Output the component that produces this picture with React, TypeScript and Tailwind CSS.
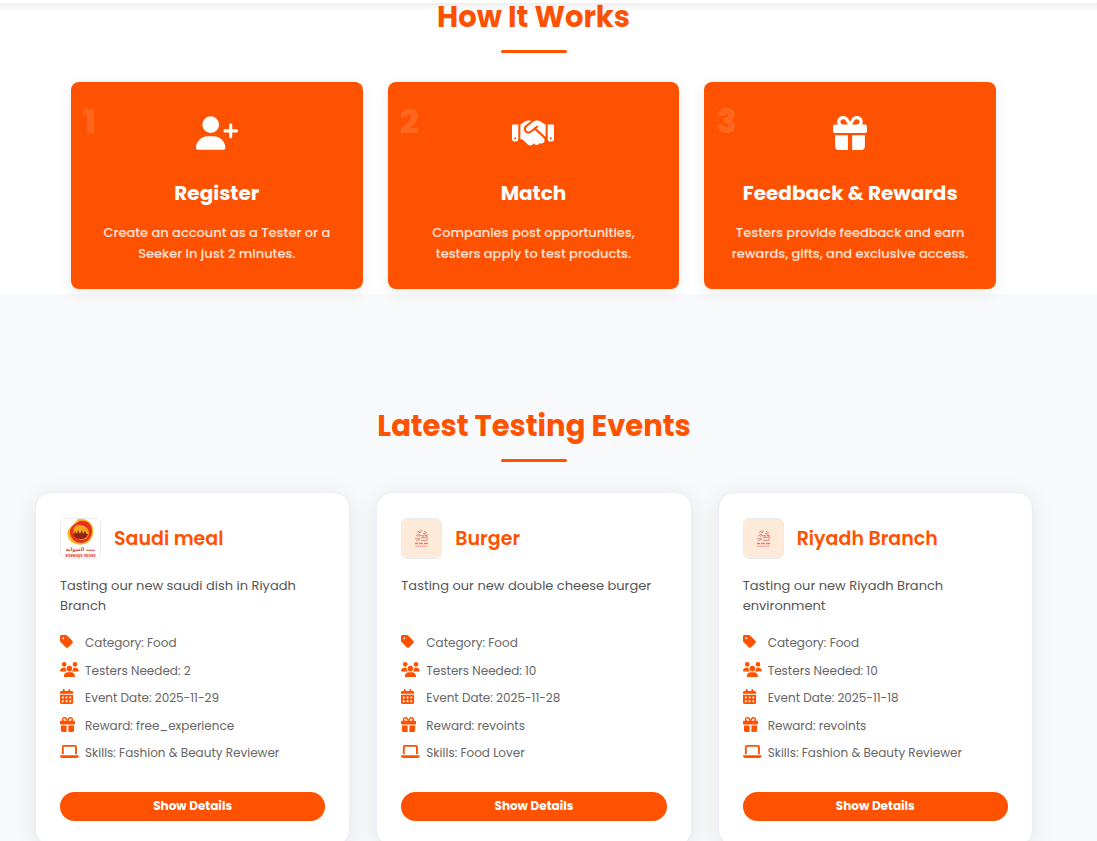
import React from 'react';
import {FaUserPlus, FaHandshake, FaGift, FaTag, FaUsers, FaCalendarDays, FaLaptop} from 'react-icons/fa6';
import type {IconType} from 'react-icons';

type Step = {
    title: string;
    text: string;
    icon: IconType;
};

type TestingEvent = {
    title: string;
    description: string;
    category: string;
    testers: number;
    date: string;
    reward: string;
    skills: string;
    logo: 'shawaya' | 'burger';
};

const steps: Step[] = [
    {title: 'Register', text: 'Create an account as a Tester or a Seeker in just 2 minutes.', icon: FaUserPlus},
    {title: 'Match', text: 'Companies post opportunities, testers apply to test products.', icon: FaHandshake},
    {title: 'Feedback & Rewards', text: 'Testers provide feedback and earn rewards, gifts, and exclusive access.', icon: FaGift},
];

const events: TestingEvent[] = [
    {
        title: 'Saudi meal',
        description: 'Tasting our new saudi dish in Riyadh Branch',
        category: 'Food',
        testers: 2,
        date: '2025-11-29',
        reward: 'free_experience',
        skills: 'Fashion & Beauty Reviewer',
        logo: 'shawaya',
    },
    {
        title: 'Burger',
        description: 'Tasting our new double cheese burger',
        category: 'Food',
        testers: 10,
        date: '2025-11-28',
        reward: 'revoints',
        skills: 'Food Lover',
        logo: 'burger',
    },
    {
        title: 'Riyadh Branch',
        description: 'Tasting our new Riyadh Branch environment',
        category: 'Food',
        testers: 10,
        date: '2025-11-18',
        reward: 'revoints',
        skills: 'Fashion & Beauty Reviewer',
        logo: 'burger',
    },
];

function ShawayaLogo() {
    return (
        <svg viewBox="0 0 39 39" className="w-full h-full" aria-hidden="true">
            <rect width="39" height="39" fill="#fff"/>
            <path d="M17 0C23-1 31 2 32 9c1 8-2 15-9 16-7 2-14-1-16-7-1-3-1-6 1-8 1-2 2-3 4-4 0-2 3-3 5-6z" fill="#fdb924"/>
            <path d="M19 2c7-1 12 3 12 10s-5 12-11 12S9 19 9 13c0-4 3-8 8-9-3 2-5 4-5 7 1-5 4-8 7-9z" fill="#e5311d"/>
            <path d="M14 7c4-2 9-1 12 2 3 4 2 8-1 11-5 2-10 0-12-4-1-3-1-6 1-9z" fill="#f9a51f"/>
            <path d="M12 15h15c-1 4-4 5-7 5s-7-1-8-5z" fill="#8e2415"/>
            <path d="M13 16l1-4 2 3 1-4 2 4 2-4 1 4 2-3 2 4z" fill="#8e2415"/>
            <text x="19.500" y="32" textAnchor="middle" fontSize="5" fontWeight="700" fill="#e0402a"
                  fontFamily="'DejaVu Sans', sans-serif" direction="rtl">بيت الشواية</text>
            <text x="19.500" y="38" textAnchor="middle" fontSize="4" fontWeight="700" fill="#e0402a"
                  fontFamily="Inter, sans-serif">shawaya house</text>
        </svg>
    );
}

function BurgerLogo() {
    return (
        <svg viewBox="0 0 39 39" className="w-full h-full" aria-hidden="true">
            <rect width="39" height="39" fill="#feead8"/>
            <g stroke="#dc8078" strokeWidth="0.900" fill="none">
                <path d="M15 14c1-2 3-2 5-2M22 12l3 2M17 13.500h2M21 14l3 1"/>
                <path d="M14 17l3-2 2 2 3-1 3 1M13 20c2-2 3 1 5-1M19 19l6-1"/>
                <path d="M17 15v3M25 15v6M14 21.500l4-1M19 21.500h6M21 17v2"/>
                <path d="M13 24.500h3M17 24.500h4M22 24.500h4" strokeWidth="1.600"/>
                <path d="M13.500 27.200h12" strokeDasharray="1.500 0.500"/>
            </g>
        </svg>
    );
}

function SectionTitle({children}: { children: React.ReactNode }) {
    return (
        <div className="flex flex-col items-center">
            <h2 className="text-[29px] leading-7 font-bold text-[#ff5200]">{children}</h2>
            <div className="mt-[19px] h-[3px] w-[66px] rounded-full bg-[#ff5200]"/>
        </div>
    );
}

function StepCard({step, number}: { step: Step; number: number }) {
    const Icon = step.icon;

    return (
        <div className="relative flex flex-col items-center rounded-lg bg-[#ff5200] px-[25px] pt-[34px] pb-[25px] text-center text-white shadow-[0_4px_15px_rgba(0,0,0,0.08)]">
            <span className="absolute top-[19px] left-3 text-[34px] leading-10 font-extrabold text-white/15">{number}</span>
            <Icon className="h-[34px] w-[42px]"/>
            <h3 className="mt-7 text-xl leading-[30px] font-bold">{step.title}</h3>
            <p className="mt-3.5 text-[13px] leading-[21px] font-medium text-white/85">{step.text}</p>
        </div>
    );
}

function DetailRow({icon: Icon, children}: { icon: IconType; children: React.ReactNode }) {
    return (
        <li className="flex h-5 items-center">
            <span className="flex h-full w-[25px] shrink-0 items-start pt-px text-[#ff5200]">
                <Icon className="h-[15px] w-[19px]" preserveAspectRatio="xMinYMid meet"/>
            </span>
            <span>{children}</span>
        </li>
    );
}

function EventCard({event}: { event: TestingEvent }) {
    return (
        <article className="flex flex-col rounded-2xl border border-[#e9eef8] bg-white p-6 pt-[25px] shadow-[0_4px_25px_rgba(0,0,0,0.08)]">
            <div className="flex items-center gap-[13px]">
                <div className="h-[41px] w-[41px] shrink-0 overflow-hidden rounded-md border border-[#e8ecef]">
                    {event.logo === 'shawaya' ? <ShawayaLogo/> : <BurgerLogo/>}
                </div>
                <h3 className="text-[19px] leading-7 font-semibold text-[#ff5200]">{event.title}</h3>
            </div>
            <p className="mt-[17px] min-h-10 text-[13px] leading-5 text-[#555]">{event.description}</p>
            <ul className="mt-[17px] flex h-[130px] flex-col justify-between text-xs text-[#666]">
                <DetailRow icon={FaTag}>Category: {event.category}</DetailRow>
                <DetailRow icon={FaUsers}>Testers Needed: {event.testers}</DetailRow>
                <DetailRow icon={FaCalendarDays}>Event Date: {event.date}</DetailRow>
                <DetailRow icon={FaGift}>Reward: {event.reward}</DetailRow>
                <DetailRow icon={FaLaptop}>Skills: {event.skills}</DetailRow>
            </ul>
            <button
                type="button"
                className="mt-[29px] h-[29px] w-full cursor-pointer rounded-full bg-[#ff5200] pb-0.5 text-xs font-bold text-white transition hover:bg-[#e64a00]"
            >
                Show Details
            </button>
        </article>
    );
}

export default function App() {
    return (
        <div className="bg-[#f8f9fb] font-['Poppins','Inter',sans-serif]">
            {/* only the lower edge of the bar stays in view once scrolled */}
            <header className="sticky -top-[77px] z-10 -mt-[77px] h-20 bg-white shadow-[0_-8px_10px_10px_rgba(0,0,0,0.1)]"/>

            <section className="bg-white pr-[30px] pb-[5px]">
                <div className="px-[71px]">
                    <SectionTitle>How It Works</SectionTitle>
                    <div className="mt-[29px] grid grid-cols-3 gap-[25px]">
                        {steps.map((step, index) => (
                            <StepCard key={step.title} step={step} number={index + 1}/>
                        ))}
                    </div>
                </div>
            </section>

            <section className="pr-[30px]">
                <div className="pt-[118px] pr-[34px] pl-[35px]">
                    <SectionTitle>Latest Testing Events</SectionTitle>
                    <div className="mt-[30px] grid grid-cols-3 gap-[26px]">
                        {events.map((event) => (
                            <EventCard key={event.title} event={event}/>
                        ))}
                    </div>
                </div>
            </section>
        </div>
    );
}
